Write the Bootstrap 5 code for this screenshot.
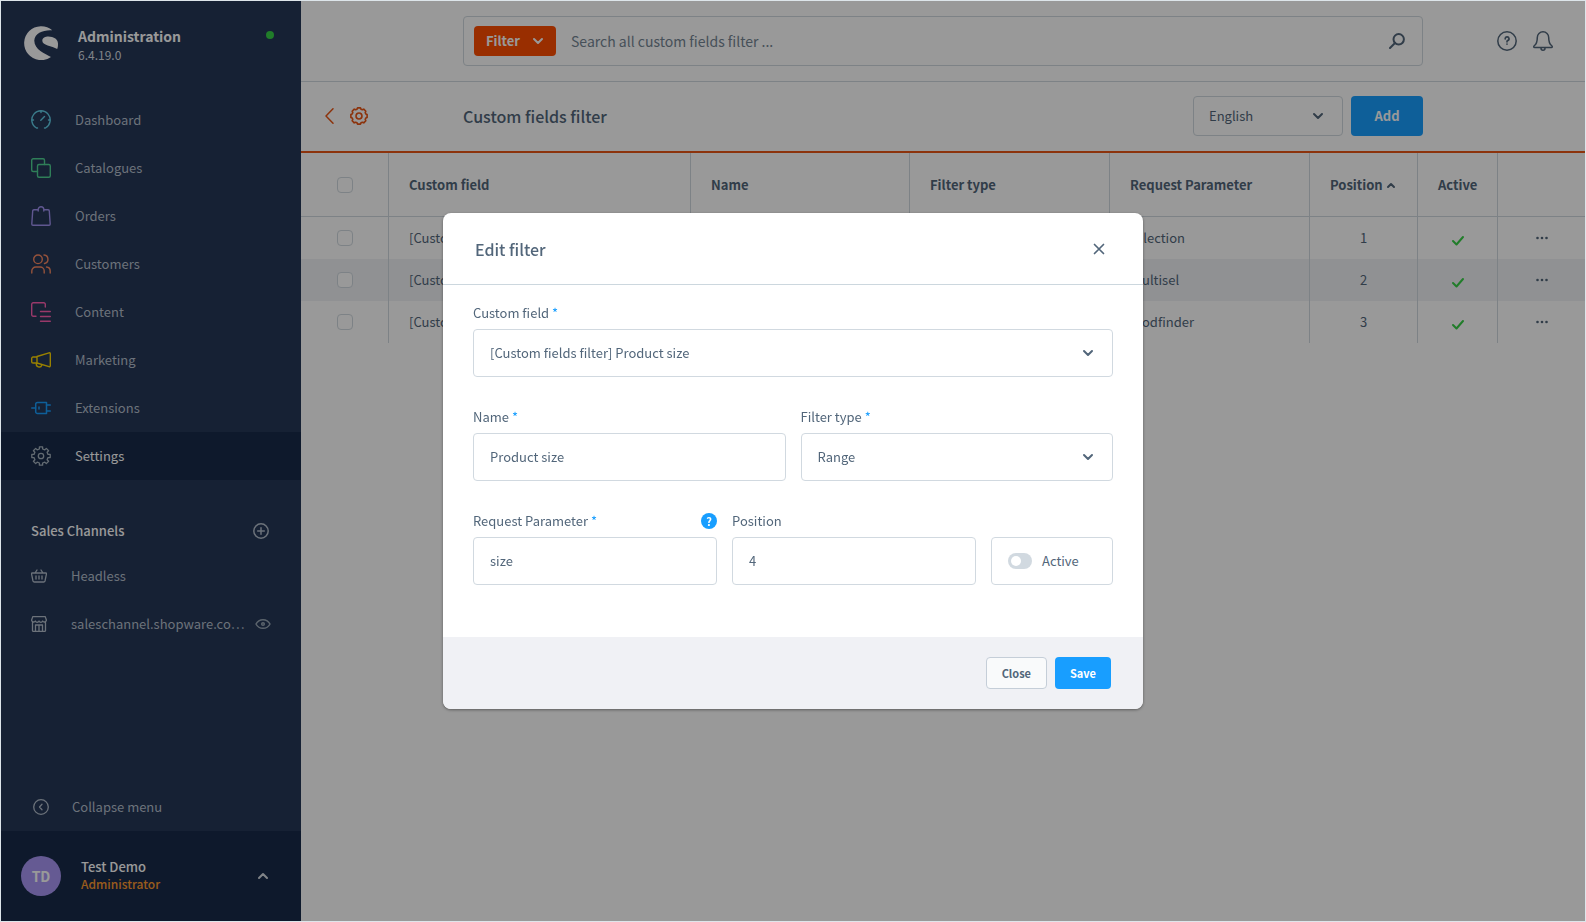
<!DOCTYPE html>
<html lang="en">
<head>
<meta charset="utf-8">
<meta name="viewport" content="width=device-width, initial-scale=1">
<title>Custom fields filter | Administration</title>
<link href="https://cdn.jsdelivr.net/npm/bootstrap@5.3.0/dist/css/bootstrap.min.css" rel="stylesheet">
<style>
  :root {
    --ink: #52667a;
    --line: #d1d9e0;
    --blue: #189eff;
    --accent: #ea5514;
    --nav-text: #b4bfcb;
  }
  body {
    font-family: "Noto Sans CJK JP", "Noto Sans", sans-serif;
    font-size: 13px;
    line-height: 16px;
    color: var(--ink);
  }
  svg { fill: none; stroke: currentColor; stroke-linecap: round; stroke-linejoin: round; flex: none; display: block; }
  a { color: inherit; text-decoration: none; }
  .app { min-height: 100vh; border: 1px solid #dde5ea; }
  .medium { font-weight: 500; }

  /* side navigation */
  .side { width: 300px; background: #253758; color: var(--nav-text); }
  .side-head { height: 95px; padding: 25px 27px 0 23px; }
  .side-title { font-size: 14px; line-height: 20px; color: #fff; }
  .side-version { font-size: 12px; line-height: 17px; color: #d5dbe2; }
  .status-dot { width: 8px; height: 8px; border-radius: 50%; background: #37d046; margin-top: 5px; }
  .side-link { height: 48px; padding: 0 30px; gap: 24px; }
  .side-link.active { background: #182b4a; color: #fff; }
  .channels-head { padding: 43px 32px 13px 30px; color: #fff; }
  .channel { height: 48px; padding: 0 30px; gap: 24px; }
  .channel .view { margin-left: -20px; color: #9aa8b5; }
  .plain { background: none; border: 0; padding: 0; color: inherit; }
  .collapse-btn { height: 48px; padding: 0 32px; gap: 23px; }
  .side-user { height: 90px; padding: 0 32px 0 20px; background: #182b4a; gap: 20px; color: #fff; }
  .avatar { width: 40px; height: 40px; border-radius: 50%; background: #a997f5; color: #fff; font-size: 14px; }
  .side-user .role { color: #ff9a30; font-size: 12px; line-height: 18px; }

  /* top bars */
  .bar { display: grid; grid-template-columns: 1fr minmax(0, 960px) 1fr; align-items: center; }
  .bar-search { height: 81px; border-bottom: 1px solid var(--line); }
  .bar-title { height: 71px; padding-bottom: 2px; border-bottom: 2px solid var(--accent); color: var(--accent); }
  .search-box { height: 50px; border: 1px solid var(--line); border-radius: 4px; padding: 0 17px 0 10px; gap: 15px; }
  .filter-btn { height: 30px; width: 82px; border-radius: 4px; background: #ff4d00; color: #fff; gap: 12px; }
  .search-box input { border: 0; outline: 0; background: none; font-size: 14px; color: var(--ink); min-width: 0; }
  .search-box input::placeholder { color: #758694; opacity: 1; }
  .page-title { font-size: 16px; line-height: 24px; font-weight: 500; color: var(--ink); }
  .field {
    height: 48px; border: 1px solid var(--line); border-radius: 4px; padding: 0 16px;
    font-size: 13px; line-height: 16px; color: var(--ink); background-color: #fff;
  }
  input.field { padding-bottom: 2px; }
  .form-select.field {
    background-image: url("data:image/svg+xml,%3Csvg xmlns='http://www.w3.org/2000/svg' viewBox='0 0 12 8'%3E%3Cpath d='M2 2l4 4 4-4' fill='none' stroke='%2352667a' stroke-width='2' stroke-linecap='round' stroke-linejoin='round'/%3E%3C/svg%3E");
    background-size: 12px 8px; background-position: right 18px center;
  }
  .lang { width: 150px; height: 40px; padding-left: 15px; }
  .action { border-radius: 4px; background: var(--blue); color: #fff; border: 0; }
  .action-lg { width: 72px; height: 40px; }

  /* listing */
  .listing { table-layout: fixed; width: 100%; border-collapse: separate; border-spacing: 0; }
  .listing th, .listing td { border-right: 1px solid var(--line); padding: 0 20px; height: 42px; white-space: nowrap; overflow: hidden; }
  .listing th { height: 64px; border-bottom: 1px solid var(--line); }
  .listing th:last-child, .listing td:last-child { border-right: 0; }
  .listing tbody tr:nth-child(even) { background: #f0f2f5; }
  .listing .form-check-input { width: 16px; height: 16px; margin: 0; border-color: var(--line); border-radius: 4px; display: block; margin-inline: auto; }
  .listing svg { margin-inline: auto; }
  .listing .tick { margin-top: 4px; color: #37d046; }

  /* dialog */
  .shade { position: absolute; inset: 1px; background: rgba(0, 0, 0, .4); z-index: 1040; }
  .edit-dialog { max-width: 700px; }
  .edit-dialog .modal-content { border: 0; border-radius: 8px; color: var(--ink); overflow: hidden; box-shadow: 0 1px 3px rgba(0, 0, 0, .4); }
  .edit-dialog .modal-header { height: 72px; padding: 0 38px 0 32px; border-color: #ccd7de; }
  .edit-dialog .modal-body { padding: 20px 30px; }
  .edit-dialog .modal-footer { height: 72px; padding: 0 32px; gap: 8px; background: #f0f1f5; border: 0; }
  .edit-dialog .modal-footer > * { margin: 0; }
  .form-line { gap: 15px; margin-bottom: 32px; }
  .form-line label { margin-bottom: 8px; }
  .w1, .w2 { min-width: 0; flex: 1 1 0; }
  .w2 { flex-grow: 2; }
  .req { color: var(--blue); }
  .help-dot { width: 16px; height: 16px; border-radius: 50%; background: var(--blue); color: #fff; font-size: 11px; line-height: 16px; padding: 0; border: 0; }
  .toggle-box { gap: 10px; }
  .toggle-box .form-check-input {
    width: 24px; height: 16px; margin: 0; border: 0; float: none; background-color: var(--line);
    background-image: url("data:image/svg+xml,%3Csvg xmlns='http://www.w3.org/2000/svg' viewBox='0 0 16 16'%3E%3Ccircle cx='8' cy='8' r='5' fill='%23fff'/%3E%3C/svg%3E");
  }
  .toggle-box label { margin: 0; }
  .action-sm { height: 32px; padding: 0 15px; font-size: 11px; border-radius: 4px; }
  .close-btn { border: 1px solid #c5ced8; background: #f9fafb; color: var(--ink); }
</style>
</head>
<body>
<div class="app d-flex position-relative">

  <aside class="side d-flex flex-column flex-shrink-0">
    <div class="side-head d-flex">
      <svg width="34" height="34" viewBox="0 0 34 34" style="fill:#fff;stroke:none"><path d="M28.3 4.3A17 17 0 1 0 27 31.000C21 28 10 23.500 10.300 14.500C10.600 7 20 3.500 28.300 4.300Z"/><path d="M18.300 14.500C18.500 10.500 24 9.800 28 11C31.500 12.200 33.800 13.800 34 17.500C34 20 33.900 21.500 33.200 23C28 20 18 19.500 18.300 14.500Z"/></svg>
      <div class="ms-3 ps-1 flex-grow-1">
        <div class="side-title fw-bold">Administration</div>
        <div class="side-version">6.4.19.0</div>
      </div>
      <span class="status-dot"></span>
    </div>

    <nav class="nav flex-column flex-nowrap">
      <a href="#" class="side-link d-flex align-items-center">
        <svg width="20" height="20" viewBox="0 0 20 20" stroke-width="1.400" color="#62cfe8"><path d="M6.500 18H5.500A9.200 9.200 0 1 1 14.500 18H13.500M10 1v1.500M1 10h1.500M17.500 10H19M9.800 10.200L13.500 6.500"/></svg>
        Dashboard</a>
      <a href="#" class="side-link d-flex align-items-center">
        <svg width="20" height="20" viewBox="0 0 20 20" stroke-width="1.400" color="#4fd393"><path d="M6.500 13.500H2.200A1.500 1.500 0 0 1 .7 12V2.200A1.500 1.500 0 0 1 2.200.7H12A1.500 1.500 0 0 1 13.500 2.200V6.500"/><rect x="6.500" y="6.500" width="12.800" height="12.800" rx="1.500"/></svg>
        Catalogues</a>
      <a href="#" class="side-link d-flex align-items-center">
        <svg width="20" height="20" viewBox="0 0 20 20" stroke-width="1.400" color="#a092f0"><path d="M7.200 5V3.500A2.800 2.800 0 0 1 12.800 3.500V5M4.800 3.700H3A1.300 1.300 0 0 0 1.700 5L.8 18A1.300 1.300 0 0 0 2 19.300H18A1.300 1.300 0 0 0 19.200 18L18.300 5A1.300 1.300 0 0 0 17 3.700H15.200M7.200 3.700H4.800M12.800 3.700H15.200"/></svg>
        Orders</a>
      <a href="#" class="side-link d-flex align-items-center">
        <svg width="20" height="20" viewBox="0 0 20 20" stroke-width="1.400" color="#f88962"><circle cx="7" cy="5.300" r="4.300"/><path d="M13 1A4.300 4.300 0 0 1 13.500 9.500M.8 19V17A4 4 0 0 1 4.800 13H9.200A4 4 0 0 1 13.200 17V19M15.500 13A4 4 0 0 1 19.200 17V19"/></svg>
        Customers</a>
      <a href="#" class="side-link d-flex align-items-center">
        <svg width="20" height="20" viewBox="0 0 20 20" stroke-width="1.400" color="#ff5fb0"><path d="M5 14.300H2.200A1.500 1.500 0 0 1 .7 12.800V2.200A1.500 1.500 0 0 1 2.200.7H12.800A1.500 1.500 0 0 1 14.300 2.200V5M9.500 9.500H19.300M9.500 14.500H19.300M9.500 19.300H19.300"/></svg>
        Content</a>
      <a href="#" class="side-link d-flex align-items-center">
        <svg width="20" height="20" viewBox="0 0 20 20" stroke-width="1.400" color="#ffd700"><path d="M6 6.500L18 2.800A1 1 0 0 1 19.300 3.700V15.800A1 1 0 0 1 18 16.700L6 13ZM6 7H2A1.300 1.300 0 0 0 .7 8.300V11.700A1.300 1.300 0 0 0 2 13H6M5.500 13.500A2.600 2.600 0 0 0 10.800 15"/></svg>
        Marketing</a>
      <a href="#" class="side-link d-flex align-items-center">
        <svg width="20" height="20" viewBox="0 0 20 20" stroke-width="1.500" color="#189eff"><path d="M.7 10H4.500M15.500 7H19.300M15.500 13H19.300M8 9v2"/><path d="M6.500 4.500H15.500V15.500H6.500A1.800 1.800 0 0 1 4.700 13.700V6.300A1.800 1.800 0 0 1 6.500 4.500Z"/></svg>
        Extensions</a>
      <a href="#" class="side-link active d-flex align-items-center" aria-current="page">
        <svg width="20" height="20" viewBox="-10 -10 20 20" stroke-width="1.300" color="#a5b2be"><path d="M-1.600-9.200L1.600-9.200L1.600-7L3.800-6.100L5.300-7.600L7.600-5.300L6.100-3.800L7-1.600L9.200-1.600L9.200 1.600L7 1.600L6.100 3.800L7.600 5.300L5.300 7.600L3.800 6.100L1.600 7L1.600 9.200L-1.600 9.200L-1.600 7L-3.800 6.100L-5.300 7.600L-7.600 5.300L-6.100 3.800L-7 1.600L-9.200 1.600L-9.200-1.600L-7-1.600L-6.100-3.800L-7.600-5.300L-5.300-7.600L-3.800-6.100L-1.600-7Z"/><circle r="2.700"/></svg>
        Settings</a>
    </nav>

    <div class="channels-head d-flex align-items-center justify-content-between">
      <span class="medium">Sales Channels</span>
      <button type="button" class="plain" aria-label="Add sales channel">
        <svg width="16" height="16" viewBox="0 0 16 16" stroke-width="1.500" color="#b4bfcb"><circle cx="8" cy="8" r="7.200"/><path d="M8 4.700v6.600M4.700 8h6.600"/></svg>
      </button>
    </div>
    <a href="#" class="channel d-flex align-items-center">
      <svg width="16" height="16" viewBox="0 0 16 16" stroke-width="1.300"><path d="M1 5H15A.6.6 0 0 1 15.500 5.800L14 13A1.500 1.500 0 0 1 12.500 14H3.500A1.500 1.500 0 0 1 2 13L.5 5.800A.6.6 0 0 1 1 5ZM4 5L6 2M12 5L10 2M5 8v3M8 8v3M11 8v3"/></svg>
      Headless</a>
    <div class="channel d-flex align-items-center">
      <svg width="16" height="16" viewBox="0 0 16 16" stroke-width="1.300"><path d="M1.500 6.500V14.500A.8.8 0 0 0 2.300 15.400H13.700A.8.8 0 0 0 14.500 14.500V6.500M1.800.6H14.200L15.400 4A2 2 0 0 1 11.700 5A2 2 0 0 1 8 5A2 2 0 0 1 4.300 5A2 2 0 0 1 .6 4ZM4.500 15V9H11.500V15M8 9V15"/></svg>
      <a href="#" class="flex-grow-1">saleschannel.shopware.co…</a>
      <svg width="16" height="12" viewBox="0 0 16 12" stroke-width="1.500" class="view"><path d="M1 6C4 .2 12 .2 15 6C12 11.800 4 11.800 1 6Z"/><circle cx="8" cy="6" r="1.300"/></svg>
    </div>

    <div class="mt-auto">
      <button type="button" class="plain collapse-btn d-flex align-items-center w-100">
        <svg width="16" height="16" viewBox="0 0 16 16" stroke-width="1.300"><circle cx="8" cy="8" r="7.300"/><path d="M9 5.300L6.500 8L9 10.700"/></svg>
        Collapse menu</button>
      <div class="side-user d-flex align-items-center">
        <span class="avatar fw-bold d-flex align-items-center justify-content-center">TD</span>
        <div class="flex-grow-1">
          <div class="medium">Test Demo</div>
          <div class="role medium">Administrator</div>
        </div>
        <button type="button" class="plain" aria-label="Open user menu">
          <svg width="12" height="8" viewBox="0 0 12 8" stroke-width="2" color="#d5dbe2"><path d="M2 6l4-4 4 4"/></svg>
        </button>
      </div>
    </div>
  </aside>

  <main class="flex-grow-1">
    <header class="bar bar-search">
      <span></span>
      <div class="search-box d-flex align-items-center">
        <button type="button" class="plain filter-btn fw-bold d-flex align-items-center justify-content-center">Filter
          <svg width="12" height="8" viewBox="0 0 12 8" stroke-width="2"><path d="M2 2l4 4 4-4"/></svg></button>
        <input type="search" class="flex-grow-1 p-0" aria-label="Search" placeholder="Search all custom fields filter ...">
        <svg width="16" height="16" viewBox="0 0 16 16" stroke-width="2"><circle cx="9.700" cy="6.300" r="5.200"/><path d="M6 10L1 15"/></svg>
      </div>
      <div class="d-flex align-items-center justify-content-end gap-3 pe-4 me-2">
        <button type="button" class="plain" aria-label="Help">
          <svg width="20" height="20" viewBox="0 0 20 20" stroke-width="1.500"><circle cx="10" cy="10" r="9.200"/><path d="M8.200 7.800A1.900 1.900 0 1 1 10.600 9.600Q10 9.900 10 10.800M10 13v.1" stroke-width="1.700"/></svg>
        </button>
        <button type="button" class="plain" aria-label="Notifications">
          <svg width="20" height="20" viewBox="0 0 20 20" stroke-width="1.500"><path d="M10 .8A5.700 5.700 0 0 1 15.700 6.500C15.700 11 16.500 13 18.500 14.500C19.600 15.400 19.500 16.500 18.300 16.500H1.700C.5 16.500.4 15.400 1.500 14.500C3.500 13 4.300 11 4.300 6.500A5.700 5.700 0 0 1 10 .8ZM8 17.200A2 2 0 0 0 12 17.200"/></svg>
        </button>
      </div>
    </header>

    <div class="bar bar-title">
      <div class="d-flex align-items-center gap-3 ps-4">
        <a href="#" aria-label="Back"><svg width="9" height="16" viewBox="0 0 9 16" stroke-width="1.500"><path d="M8 .8L1 8L8 15.200"/></svg></a>
        <svg width="18" height="18" viewBox="-10 -10 20 20" stroke-width="1.800"><path d="M-1.600-9L1.600-9L2.200-7.600L3.800-6.900L5.300-7.600L7.600-5.300L6.900-3.800L7.600-2.200L9-1.600L9 1.600L7.600 2.200L6.900 3.800L7.600 5.300L5.300 7.600L3.800 6.900L2.200 7.600L1.600 9L-1.600 9L-2.200 7.600L-3.800 6.900L-5.300 7.600L-7.600 5.300L-6.900 3.800L-7.600 2.200L-9 1.600L-9-1.600L-7.600-2.200L-6.900-3.800L-7.600-5.300L-5.300-7.600L-3.800-6.900L-2.200-7.600Z"/><circle r="3.300"/></svg>
      </div>
      <div class="d-flex align-items-center gap-2">
        <h1 class="page-title m-0 flex-grow-1">Custom fields filter</h1>
        <select class="form-select field lang" aria-label="Language"><option>English</option></select>
        <button type="button" class="action action-lg fw-bold">Add</button>
      </div>
      <span></span>
    </div>

    <table class="listing">
      <colgroup>
        <col style="width:88px"><col><col style="width:219px"><col style="width:200px"><col style="width:200px"><col style="width:108px"><col style="width:80px"><col style="width:87px">
      </colgroup>
      <thead>
        <tr>
          <th><input type="checkbox" class="form-check-input" aria-label="Select all"></th>
          <th>Custom field</th><th>Name</th><th>Filter type</th><th>Request Parameter</th>
          <th><span class="d-flex align-items-center">Position&nbsp;<svg width="10" height="8" viewBox="0 0 10 8" stroke-width="2" class="m-0"><path d="M2 6l3-3 3 3"/></svg></span></th>
          <th>Active</th><th></th>
        </tr>
      </thead>
      <tbody>
        <tr>
          <td><input type="checkbox" class="form-check-input" aria-label="Select row 1"></td>
          <td>[Custom fields filter]</td><td></td><td></td><td>selection</td><td class="text-center">1</td>
          <td><svg class="tick" width="14" height="12" viewBox="0 0 14 12" stroke-width="2"><path d="M2 7l3.500 3.500L12 3"/></svg></td>
          <td><svg width="12" height="4" viewBox="0 0 12 4" style="fill:currentColor;stroke:none"><circle cx="1.500" cy="2" r="1.300"/><circle cx="6" cy="2" r="1.300"/><circle cx="10.500" cy="2" r="1.300"/></svg></td>
        </tr>
        <tr>
          <td><input type="checkbox" class="form-check-input" aria-label="Select row 2"></td>
          <td>[Custom fields filter]</td><td></td><td></td><td>multisel</td><td class="text-center">2</td>
          <td><svg class="tick" width="14" height="12" viewBox="0 0 14 12" stroke-width="2"><path d="M2 7l3.500 3.500L12 3"/></svg></td>
          <td><svg width="12" height="4" viewBox="0 0 12 4" style="fill:currentColor;stroke:none"><circle cx="1.500" cy="2" r="1.300"/><circle cx="6" cy="2" r="1.300"/><circle cx="10.500" cy="2" r="1.300"/></svg></td>
        </tr>
        <tr>
          <td><input type="checkbox" class="form-check-input" aria-label="Select row 3"></td>
          <td>[Custom fields filter]</td><td></td><td></td><td>foodfinder</td><td class="text-center">3</td>
          <td><svg class="tick" width="14" height="12" viewBox="0 0 14 12" stroke-width="2"><path d="M2 7l3.500 3.500L12 3"/></svg></td>
          <td><svg width="12" height="4" viewBox="0 0 12 4" style="fill:currentColor;stroke:none"><circle cx="1.500" cy="2" r="1.300"/><circle cx="6" cy="2" r="1.300"/><circle cx="10.500" cy="2" r="1.300"/></svg></td>
        </tr>
      </tbody>
    </table>
  </main>
</div>
<div class="shade"></div>

<div class="modal d-block" tabindex="-1" role="dialog" aria-modal="true" aria-labelledby="editTitle">
  <div class="modal-dialog modal-dialog-centered edit-dialog">
    <form class="modal-content">
      <div class="modal-header">
        <h2 class="page-title m-0" id="editTitle">Edit filter</h2>
        <button type="button" class="plain" aria-label="Close dialog">
          <svg width="12" height="12" viewBox="0 0 12 12" stroke-width="1.700"><path d="M1.500 1.500l9 9M10.500 1.500l-9 9"/></svg>
        </button>
      </div>
      <div class="modal-body">
        <div class="form-line d-flex">
          <div class="w1">
            <label class="d-block" for="customField">Custom field <span class="req">*</span></label>
            <select id="customField" class="form-select field"><option>[Custom fields filter] Product size</option></select>
          </div>
        </div>
        <div class="form-line d-flex">
          <div class="w1">
            <label class="d-block" for="filterName">Name <span class="req">*</span></label>
            <input id="filterName" type="text" class="form-control field" value="Product size">
          </div>
          <div class="w1">
            <label class="d-block" for="filterType">Filter type <span class="req">*</span></label>
            <select id="filterType" class="form-select field"><option>Range</option></select>
          </div>
        </div>
        <div class="form-line d-flex align-items-end">
          <div class="w2">
            <div class="d-flex justify-content-between">
              <label for="requestParam">Request Parameter <span class="req">*</span></label>
              <button type="button" class="help-dot fw-bold" aria-label="About the request parameter">?</button>
            </div>
            <input id="requestParam" type="text" class="form-control field" value="size">
          </div>
          <div class="w2">
            <label class="d-block" for="position">Position</label>
            <input id="position" type="text" inputmode="numeric" class="form-control field" value="4">
          </div>
          <div class="w1">
            <div class="field toggle-box form-switch d-flex align-items-center">
              <input id="active" type="checkbox" role="switch" class="form-check-input">
              <label for="active">Active</label>
            </div>
          </div>
        </div>
      </div>
      <div class="modal-footer">
        <button type="button" class="action-sm close-btn fw-bold">Close</button>
        <button type="submit" class="action action-sm fw-bold">Save</button>
      </div>
    </form>
  </div>
</div>
<script src="https://cdn.jsdelivr.net/npm/bootstrap@5.3.0/dist/js/bootstrap.bundle.min.js"></script>
</body>
</html>
